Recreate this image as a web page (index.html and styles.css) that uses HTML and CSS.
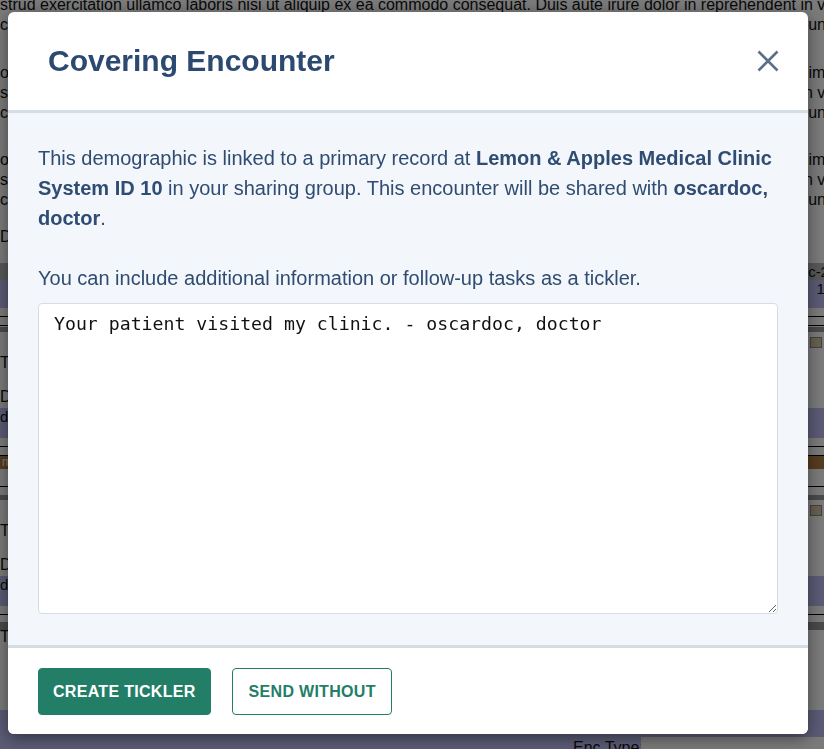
FILE: index.html
```html
<!DOCTYPE html>
<html lang="en">
<head>
<meta charset="utf-8">
<title>Covering Encounter</title>
<link rel="stylesheet" href="styles.css">
</head>
<body>
<div class="page" aria-hidden="true">
  <div class="para p1">
    <span class="ln">strud exercitation ullamco laboris nisi ut aliquip ex ea commodo consequat. Duis aute irure dolor in reprehendent in voluptate velit esse</span>
    <span class="ln">cillum dolore eu fugiat nulla pariatur. Excepteur sint occaecat cupidatat non proident, sunt in culpa qui officia deserunt mollit anim id est</span>
  </div>
  <div class="para p2">
    <span class="ln">olor sit amet, consectetur adipiscing elit, sed do eiusmod tempor incididunt ut labore et dolore magna aliqua. Ut enim ad minim veniam, quis n</span>
    <span class="ln">strud exercitation ullamco laboris nisi ut aliquip ex ea commodo consequat. Duis aute irure dolor in reprehenderit in voluptate velit esse cillum</span>
    <span class="ln">cillum dolore eu fugiat nulla pariatur. Excepteur sint occaecat cupidatat non proident, sunt in culpa qui officia deserunt mollit anim id est laborum</span>
  </div>
  <div class="para p3">
    <span class="ln">olor sit amet, consectetur adipiscing elit, sed do eiusmod tempor incididunt ut labore et dolore magna aliqua. Ut enim ad minim veniam, quis n</span>
    <span class="ln">strud exercitation ullamco laboris nisi ut aliquip ex ea commodo consequat. Duis aute irure dolor in reprehenderit in voluptate velit esse cillum</span>
    <span class="ln">cillum dolore eu fugiat nulla pariatur. Excepteur sint occaecat cupidatat non proident, sunt in culpa qui officia deserunt mollit anim id est laborum</span>
  </div>
  <div class="ln de">Dear Doctor,</div>

  <div class="enc">
    <div class="enc-head"><span class="right">Dec-2023</span></div>
    <div class="enc-date"><span class="right">12:00</span></div>
    <div class="rule gap8"></div>
    <div class="rule gap1"></div>
    <div class="band"></div>
    <div class="tools"><span class="pencil"></span></div>
    <div class="ln to">To: oscardoc</div>
    <div class="ln de2">Details</div>
    <div class="enc-date tall"><span class="left">d</span><span class="right">. 14</span></div>
    <div class="rule gap8 mt8"></div>
    <div class="rule brown"><span>m</span></div>
    <div class="rule gap8 mt17"></div>
    <div class="band"></div>
    <div class="tools"><span class="pencil"></span></div>
    <div class="ln to">To: oscardoc</div>
    <div class="ln de2">Details</div>
    <div class="enc-date tall"><span class="left">d</span><span class="right">. 14</span></div>
    <div class="rule gap7 mt8"></div>
    <div class="band wide"></div>
    <div class="ln t">T</div>
  </div>
  <div class="bottom-bar">
    <span class="enc-label">Enc Type:</span>
    <span class="enc-box"></span>
  </div>
</div>

<div class="backdrop">
  <div class="modal" role="dialog" aria-labelledby="modal-title">
    <header class="modal-header">
      <h2 class="modal-title" id="modal-title">Covering Encounter</h2>
      <button class="close" type="button" aria-label="Close">
        <svg width="22" height="22" viewBox="0 0 22 22"><path d="M1.5 1.5L20.5 20.5M20.5 1.5L1.5 20.5" stroke="#5b6f88" stroke-width="2.5" fill="none"/></svg>
      </button>
    </header>
    <div class="modal-body">
      <p>This demographic is linked to a primary record at <strong>Lemon &amp; Apples Medical Clinic System ID 10</strong> in your sharing group. This encounter will be shared with <strong>oscardoc, doctor</strong>.</p>
      <p class="last">You can include additional information or follow-up tasks as a tickler.</p>
      <textarea class="note">Your patient visited my clinic. - oscardoc, doctor</textarea>
    </div>
    <footer class="modal-footer">
      <button class="btn btn-primary" type="button">Create Tickler</button>
      <button class="btn btn-outline" type="button">Send Without</button>
    </footer>
  </div>
</div>
</body>
</html>
```

FILE: styles.css
```css
html, body {
  margin: 0;
  padding: 0;
}

body {
  font-family: "Liberation Sans", Arial, sans-serif;
  background: #fff;
  height: 749px;
  overflow: hidden;
}

/* ---------- background page ---------- */
.page {
  margin-top: -5px;
  height: 754px;
  overflow: hidden;
  font-size: 16px;
  line-height: 20px;
  color: #111;
}

.ln {
  display: block;
  white-space: nowrap;
  overflow: hidden;
  height: 20px;
}

.para { overflow: hidden; }
.p1 { height: 40px; margin-bottom: 28px; }
.p2 { height: 60px; margin-bottom: 27px; }
.p3 { height: 60px; margin-bottom: 17px; }
.de { margin-bottom: 16px; }

.enc-head {
  height: 17px;
  background: #b8b8b8;
  font-size: 15px;
  line-height: 17px;
  display: flex;
}

.enc-date {
  height: 28px;
  background: #bdbdf4;
  font-size: 15px;
  line-height: 17px;
  display: flex;
}

.enc-date.tall { height: 30px; }

.right {
  margin-left: auto;
  margin-right: -30px;
  white-space: nowrap;
}

.rule { border-top: 1px solid #000; }
.gap8 { height: 8px; margin-top: 8px; }
.gap1 { height: 1px; }
.gap7 { height: 7px; }
.mt8 { margin-top: 8px; }
.mt17 { margin-top: 17px; }

.band { height: 5px; background: #9a9a9a; }
.band.wide { height: 8px; }

.brown {
  height: 13px;
  background: #b47c40;
  color: #fff;
  font-size: 12px;
  line-height: 13px;
  padding-left: 2px;
}

.tools {
  height: 16px;
  padding-top: 5px;
  display: flex;
  justify-content: flex-end;
  padding-right: 2px;
}

.pencil {
  width: 10px;
  height: 9px;
  background: #d9c9a8;
  border: 1px solid #8a8a8a;
}

.de2 { margin-top: 14px; margin-bottom: 1px; }
.t { margin-top: -3px; }

.bottom-bar {
  margin-top: 63px;
  height: 60px;
  background: #bdbdf4;
  display: flex;
  align-items: flex-start;
  padding-top: 27px;
}

.enc-label {
  margin-left: 573px;
  width: 68px;
  white-space: nowrap;
  font-size: 16px;
  line-height: 20px;
  margin-top: 1px;
}

.enc-box {
  flex: 1;
  height: 40px;
  background: #fff;
}

/* ---------- modal ---------- */
.backdrop {
  position: fixed;
  inset: 0;
  background: rgba(0, 0, 0, 0.52);
  padding: 12px 0 0 8px;
  box-sizing: border-box;
}

.modal {
  width: 800px;
  background: #fff;
  border-radius: 6px;
  box-shadow: 0 4px 16px rgba(0, 0, 0, 0.45);
  overflow: hidden;
  display: flex;
  flex-direction: column;
}

.modal-header {
  display: flex;
  align-items: center;
  justify-content: space-between;
  padding: 26px 29px 27px 40px;
  border-bottom: 3px solid #d4dce6;
}

.modal-title {
  margin: 0;
  font-size: 30px;
  line-height: 45px;
  font-weight: 700;
  color: #2c4a70;
}

.close {
  border: 0;
  background: none;
  padding: 0;
  width: 22px;
  height: 22px;
  display: block;
  cursor: pointer;
}

.close svg { display: block; }

.modal-body {
  background: #f3f6fa;
  padding: 30px 30px 31px;
}

.modal-body p {
  margin: 0 0 30px;
  font-size: 20px;
  line-height: 30px;
  color: #2f4c72;
}

.modal-body p.last { margin-bottom: 10px; }

.note {
  display: block;
  box-sizing: border-box;
  width: 100%;
  height: 311px;
  margin: 0;
  padding: 8px 15px;
  font-family: "DejaVu Sans Mono", "Liberation Mono", monospace;
  font-size: 18.2px;
  line-height: 24px;
  color: #111;
  background: #fff;
  border: 1px solid #d6dde5;
  border-radius: 4px;
}

.modal-footer {
  display: flex;
  gap: 21px;
  padding: 20px 30px 19px;
  border-top: 3px solid #d4dce6;
  background: #fff;
}

.btn {
  font-family: "Liberation Sans", Arial, sans-serif;
  font-size: 16px;
  font-weight: 700;
  letter-spacing: 0.3px;
  line-height: 19px;
  text-transform: uppercase;
  padding: 13px 14px;
  border-radius: 4px;
  border: 1px solid #237e68;
  cursor: pointer;
}

.btn-primary {
  background: #237e68;
  color: #fff;
}

.btn-outline {
  background: #fff;
  color: #237e68;
  padding: 13px 15px 13px 16px;
}
```
